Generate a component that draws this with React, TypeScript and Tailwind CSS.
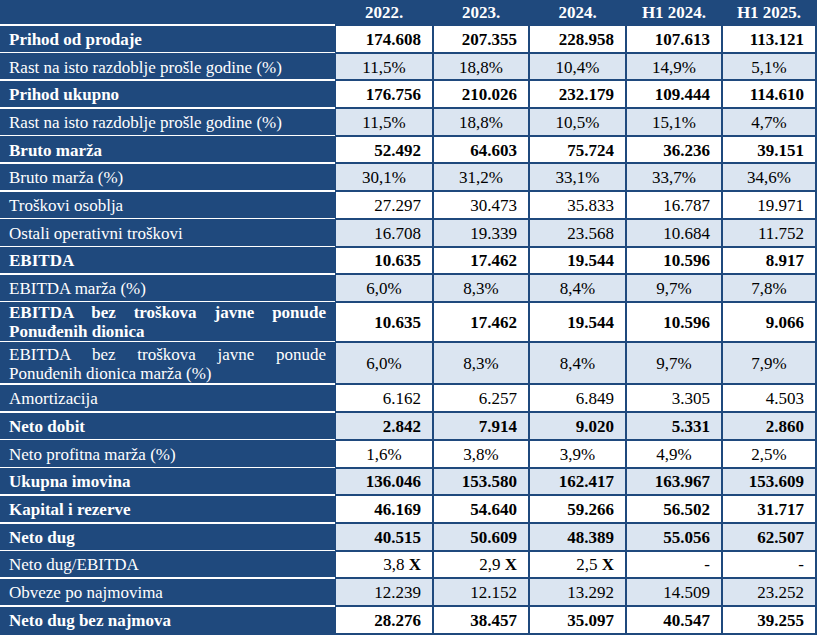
type Row = {
  label: string;
  values: string[];
  bold?: boolean;
  shaded?: boolean;
  center?: boolean;
  tall?: "a" | "b";
};

const rows: Row[] = [
  { label: "Prihod od prodaje", values: ["174.608", "207.355", "228.958", "107.613", "113.121"], bold: true },
  { label: "Rast na isto razdoblje prošle godine (%)", values: ["11,5%", "18,8%", "10,4%", "14,9%", "5,1%"], shaded: true, center: true },
  { label: "Prihod ukupno", values: ["176.756", "210.026", "232.179", "109.444", "114.610"], bold: true },
  { label: "Rast na isto razdoblje prošle godine (%)", values: ["11,5%", "18,8%", "10,5%", "15,1%", "4,7%"], shaded: true, center: true },
  { label: "Bruto marža", values: ["52.492", "64.603", "75.724", "36.236", "39.151"], bold: true },
  { label: "Bruto marža (%)", values: ["30,1%", "31,2%", "33,1%", "33,7%", "34,6%"], shaded: true, center: true },
  { label: "Troškovi osoblja", values: ["27.297", "30.473", "35.833", "16.787", "19.971"] },
  { label: "Ostali operativni troškovi", values: ["16.708", "19.339", "23.568", "10.684", "11.752"], shaded: true },
  { label: "EBITDA", values: ["10.635", "17.462", "19.544", "10.596", "8.917"], bold: true },
  { label: "EBITDA marža (%)", values: ["6,0%", "8,3%", "8,4%", "9,7%", "7,8%"], shaded: true, center: true },
  { label: "EBITDA bez troškova javne ponude Ponuđenih dionica", values: ["10.635", "17.462", "19.544", "10.596", "9.066"], bold: true, tall: "a" },
  { label: "EBITDA bez troškova javne ponude Ponuđenih dionica marža (%)", values: ["6,0%", "8,3%", "8,4%", "9,7%", "7,9%"], shaded: true, center: true, tall: "b" },
  { label: "Amortizacija", values: ["6.162", "6.257", "6.849", "3.305", "4.503"] },
  { label: "Neto dobit", values: ["2.842", "7.914", "9.020", "5.331", "2.860"], bold: true, shaded: true },
  { label: "Neto profitna marža (%)", values: ["1,6%", "3,8%", "3,9%", "4,9%", "2,5%"], center: true },
  { label: "Ukupna imovina", values: ["136.046", "153.580", "162.417", "163.967", "153.609"], bold: true, shaded: true },
  { label: "Kapital i rezerve", values: ["46.169", "54.640", "59.266", "56.502", "31.717"], bold: true },
  { label: "Neto dug", values: ["40.515", "50.609", "48.389", "55.056", "62.507"], bold: true, shaded: true },
  { label: "Neto dug/EBITDA", values: ["3,8 X", "2,9 X", "2,5 X", "-", "-"] },
  { label: "Obveze po najmovima", values: ["12.239", "12.152", "13.292", "14.509", "23.252"], shaded: true },
  { label: "Neto dug bez najmova", values: ["28.276", "38.457", "35.097", "40.547", "39.255"], bold: true },
];

const headers = ["2022.", "2023.", "2024.", "H1 2024.", "H1 2025."];
const widths = ["w-[96px] ml-[1px]", "w-[94px] ml-[2px]", "w-[95px] ml-[2px]", "w-[94px] ml-[2px]", "w-[92px] ml-[2px]"];

// "3,8 X" – the multiplier sign is bold in the source
const renderValue = (v: string) =>
  v.endsWith(" X") ? (
    <>
      {v.slice(0, -1)}
      <b>X</b>
    </>
  ) : (
    v
  );

export default function App() {
  return (
    <div className="w-[817px] h-[635px] bg-white" style={{ fontFamily: '"Liberation Serif", "Times New Roman", serif' }}>
      <div className="bg-[#1f497d] pb-[2px] text-[17px]">
        <div className="flex h-[24px] items-center pt-[1px] font-bold text-white">
          <div className="w-[335px]" />
          {headers.map((h, i) => (
            <div key={i} className={`${widths[i]} text-center`}>
              {h}
            </div>
          ))}
        </div>
        {rows.map((r, idx) => {
          const h = r.tall === "a" ? "h-[38px]" : r.tall === "b" ? "h-[40.6px]" : "h-[25.7px]";
          return (
            <div key={idx} className={`flex ${h} mt-[2px] relative`}>
              <div
                className={`w-[335px] flex items-center pl-[9px] pr-[9px] pt-[1px] text-white ${r.bold ? "font-bold" : ""} ${r.tall ? "leading-[19px] text-justify" : "leading-none"}`}
              >
                <span className="w-full" style={r.tall ? { textAlignLast: "left" } : undefined}>
                  {r.label}
                </span>
              </div>
              <div className="absolute left-0 top-[-2px] w-[335px] h-[1.6px] bg-white" />
              {r.values.map((v, i) => (
                <div
                  key={i}
                  className={`${widths[i]} flex items-center pt-[1px] leading-none text-black whitespace-pre ${r.shaded ? "bg-[#dbe5f1]" : "bg-white"} ${r.bold ? "font-bold" : ""} ${r.center ? "justify-center" : "justify-end pr-[11px]"}`}
                >
                  <span>{renderValue(v)}</span>
                </div>
              ))}
            </div>
          );
        })}
      </div>
    </div>
  );
}
